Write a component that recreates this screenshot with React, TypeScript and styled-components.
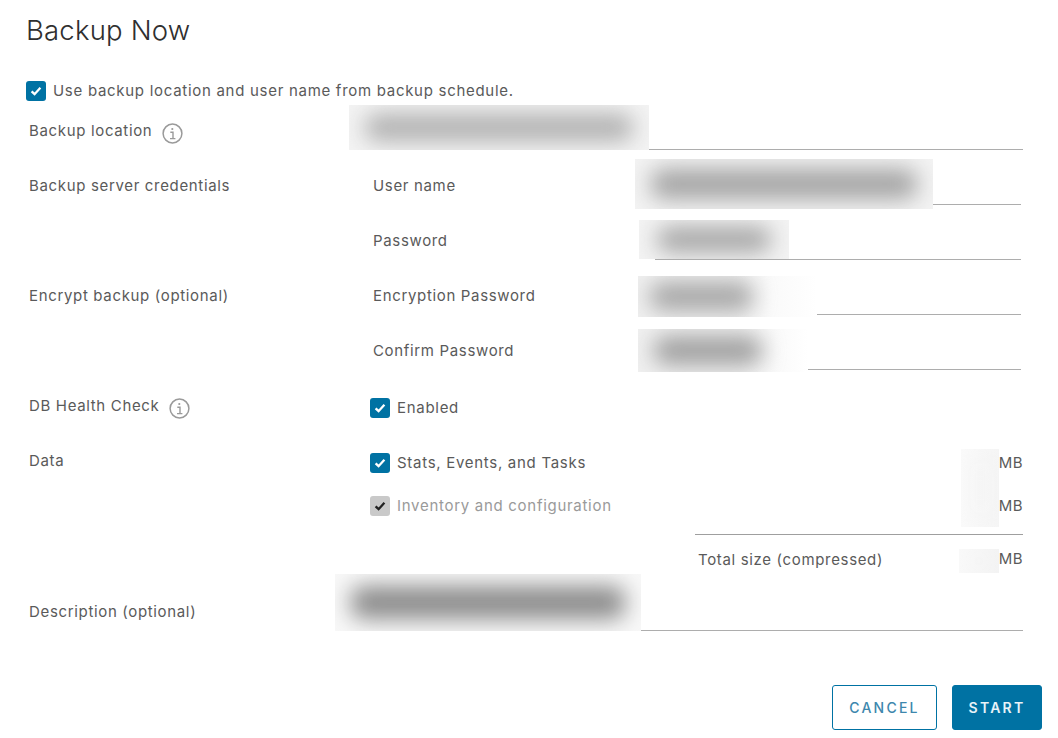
import React from "react";
import styled, { createGlobalStyle } from "styled-components";

const Global = createGlobalStyle`
  html, body { margin: 0; padding: 0; background: #fff; }
  body { font-family: Inter, "Liberation Sans", sans-serif; color: #5a5a5a; }
`;

const Page = styled.div`
  width: 1058px;
  height: 738px;
  overflow: hidden;
  position: relative;
  display: flex;
  flex-direction: column;
  box-sizing: border-box;
`;

const Title = styled.h1`
  margin: 12px 0 1px 26px;
  height: 36px;
  line-height: 36px;
  font-size: 27.5px;
  font-weight: 300;
  letter-spacing: 0.2px;
  color: #2f2f2f;
`;

const TopCheck = styled.div`
  margin: 32px 0 0 26px;
  height: 20px;
`;

const CheckLine = styled.label<{ $disabled?: boolean }>`
  display: flex;
  align-items: center;
  gap: 7px;
  height: 20px;
  font-size: 15px;
  line-height: 18px;
  letter-spacing: 0.71px;
  white-space: nowrap;
  color: ${(p) => (p.$disabled ? "#9a9a9a" : "#5a5a5a")};
`;

const Box = styled.span<{ $disabled?: boolean }>`
  flex: none;
  width: 20px;
  height: 20px;
  border-radius: 3px;
  background: ${(p) => (p.$disabled ? "#c9c9c9" : "#0072a3")};
  color: ${(p) => (p.$disabled ? "#222" : "#fff")};
  display: flex;
  align-items: center;
  justify-content: center;
`;

const Form = styled.div`
  margin: 5px 35px 0 29px;
  display: flex;
  flex-direction: column;
`;

const Row = styled.div<{ $h: number; $mt?: number }>`
  display: grid;
  grid-template-columns: 341px 1fr;
  height: ${(p) => p.$h}px;
  margin-top: ${(p) => p.$mt ?? 0}px;
`;

const Label = styled.div<{ $top: number }>`
  padding-top: ${(p) => p.$top}px;
  font-size: 15px;
  line-height: 20px;
  letter-spacing: 0.66px;
  display: flex;
  align-items: flex-start;
  gap: 10px;
  white-space: nowrap;
`;

const Info = styled.svg`
  flex: none;
  margin-top: 2px;
  width: 21px;
  height: 21px;
  color: #9a9a9a;
`;

const Field = styled.div`
  position: relative;
  border-bottom: 1px solid #adadad;
`;

const SubGrid = styled.div`
  display: grid;
  grid-template-columns: 285px 366px;
  height: 100%;
`;

const SubLabel = styled.div`
  padding: 11px 0 0 3px;
  font-size: 15px;
  line-height: 20px;
  letter-spacing: 0.66px;
`;

const Redaction = styled.div<{ $x: number; $y: number; $w: number; $h: number; $tone: string; $bg?: string; $inset?: string }>`
  position: absolute;
  left: ${(p) => p.$x}px;
  top: ${(p) => p.$y}px;
  width: ${(p) => p.$w}px;
  height: ${(p) => p.$h}px;
  background: ${(p) => p.$bg ?? "#f3f3f3"};
  overflow: hidden;
  &::after {
    content: "";
    position: absolute;
    inset: ${(p) => p.$inset ?? "11px 16px"};
    background: ${(p) => p.$tone};
    border-radius: 12px;
    filter: blur(11px);
  }
`;

const DataCol = styled.div<{ $top: number }>`
  display: flex;
  flex-direction: column;
  position: relative;
  padding-top: ${(p) => p.$top}px;
`;

const DataRow = styled.div<{ $h: number }>`
  height: ${(p) => p.$h}px;
  display: flex;
  align-items: flex-start;
  justify-content: space-between;
`;

const Mb = styled.span`
  position: relative;
  font-size: 15px;
  line-height: 20px;
  letter-spacing: 0.4px;
`;

const TotalWrap = styled.div`
  margin-left: 325px;
  border-top: 1px solid #9f9f9f;
  height: 49px;
  display: flex;
  align-items: center;
  justify-content: space-between;
  padding-left: 3px;
  font-size: 15px;
  letter-spacing: 0.66px;
  box-sizing: border-box;
`;

const Footer = styled.div`
  position: absolute;
  right: 16px;
  bottom: 8px;
  display: flex;
  gap: 15px;
`;

const Button = styled.button<{ $primary?: boolean }>`
  height: 45px;
  width: ${(p) => (p.$primary ? 90 : 105)}px;
  padding: 0;
  border-radius: 3px;
  border: 1px solid #0072a3;
  background: ${(p) => (p.$primary ? "#0072a3" : "#fff")};
  color: ${(p) => (p.$primary ? "#e8f3f8" : "#3d87ad")};
  font-family: Inter, sans-serif;
  font-size: 14px;
  font-weight: ${(p) => (p.$primary ? 600 : 500)};
  letter-spacing: 2.25px;
`;

const Check = () => (
  <svg width="12" height="12" viewBox="0 0 12 12" fill="none" stroke="currentColor" strokeWidth="2.3">
    <path d="M1.6 6.3 L4.6 9.2 L10.4 2.8" />
  </svg>
);

const InfoIcon = () => (
  <Info viewBox="0 0 21 21" fill="none" stroke="currentColor">
    <circle cx="10.5" cy="10.5" r="9.4" strokeWidth="1.5" />
    <circle cx="10.3" cy="6" r="1.1" fill="currentColor" stroke="none" />
    <path d="M8.3 9.2 H11 V15.4 M8 15.6 H13.4" strokeWidth="1.4" />
  </Info>
);

const CheckItem = ({ children, disabled }: { children: React.ReactNode; disabled?: boolean }) => (
  <CheckLine $disabled={disabled}>
    <Box $disabled={disabled}>
      <Check />
    </Box>
    {children}
  </CheckLine>
);

export default function App() {
  return (
    <Page>
      <Global />
      <Title>Backup Now</Title>
      <TopCheck>
        <CheckItem>Use backup location and user name from backup schedule.</CheckItem>
      </TopCheck>
      <Form>
        <Row $h={44}>
          <Label $top={15}>
            Backup location <InfoIcon />
          </Label>
          <Field>
            <Redaction $x={-21} $y={-1} $w={300} $h={45} $tone="#b0b0b0" $inset="9px 16px" />
          </Field>
        </Row>
        <Row $h={40} $mt={15}>
          <Label $top={11}>Backup server credentials</Label>
          <SubGrid>
            <SubLabel>User name</SubLabel>
            <Field>
              <Redaction $x={-20} $y={-6} $w={298} $h={50} $tone="#a4a4a4" $inset="10px 16px" />
            </Field>
          </SubGrid>
        </Row>
        <Row $h={40} $mt={15}>
          <Label $top={11} />
          <SubGrid>
            <SubLabel>Password</SubLabel>
            <Field>
              <Redaction $x={-16} $y={0} $w={150} $h={39} $tone="#a4a4a4" $inset="7px 18px" />
            </Field>
          </SubGrid>
        </Row>
        <Row $h={40} $mt={15}>
          <Label $top={11}>Encrypt backup (optional)</Label>
          <SubGrid>
            <SubLabel>Encryption Password</SubLabel>
            <Field>
              <Redaction $x={-17} $y={1} $w={179} $h={41} $tone="#a4a4a4" $bg="linear-gradient(90deg,#f0f0f0 0 55%,#fafafa 75%,#fff)" $inset="7px 64px 7px 12px" />
            </Field>
          </SubGrid>
        </Row>
        <Row $h={40} $mt={15}>
          <Label $top={11} />
          <SubGrid>
            <SubLabel>Confirm Password</SubLabel>
            <Field>
              <Redaction $x={-17} $y={-1} $w={170} $h={43} $tone="#9c9c9c" $bg="linear-gradient(90deg,#f0f0f0 0 60%,#fafafa 82%,#fff)" $inset="8px 46px 8px 16px" />
            </Field>
          </SubGrid>
        </Row>
        <Row $h={38} $mt={19}>
          <Label $top={7}>
            DB Health Check <InfoIcon />
          </Label>
          <DataCol $top={9}>
            <CheckItem>Enabled</CheckItem>
          </DataCol>
        </Row>
        <Row $h={141} $mt={17}>
          <Label $top={7}>Data</Label>
          <DataCol $top={9}>
            <DataRow $h={43}>
              <CheckItem>Stats, Events, and Tasks</CheckItem>
              <Mb>MB</Mb>
            </DataRow>
            <DataRow $h={38}>
              <CheckItem disabled>Inventory and configuration</CheckItem>
              <Mb>MB</Mb>
            </DataRow>
            <TotalWrap>
              <span>Total size (compressed)</span>
              <Mb>MB</Mb>
            </TotalWrap>
            <Redaction $x={591} $y={5} $w={38} $h={78} $tone="#f2f2f2" $bg="linear-gradient(90deg,#fafafa,#f5f5f5)" />
            <Redaction $x={589} $y={105} $w={40} $h={24} $tone="#f2f2f2" $bg="linear-gradient(90deg,#f9f9f9,#f3f3f3)" />
          </DataCol>
        </Row>
        <Row $h={47} $mt={-1}>
          <Label $top={18}>Description (optional)</Label>
          <Field>
            <Redaction $x={-35} $y={-10} $w={306} $h={57} $tone="#8c8c8c" $bg="#f8f8f8" $inset="12px 16px" />
          </Field>
        </Row>
      </Form>
      <Footer>
        <Button>CANCEL</Button>
        <Button $primary>START</Button>
      </Footer>
    </Page>
  );
}
